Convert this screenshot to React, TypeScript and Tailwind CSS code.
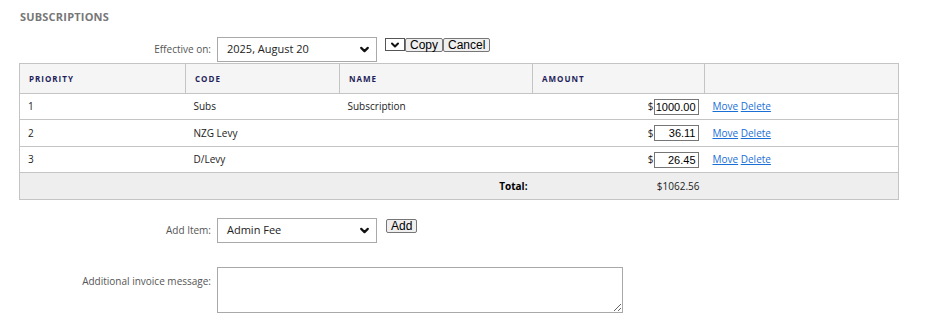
const rows = [
  { priority: "1", code: "Subs", name: "Subscription", amount: "1000.00", h: "h-[26px]" },
  { priority: "2", code: "NZG Levy", name: "", amount: "36.11", h: "h-[27px]" },
  { priority: "3", code: "D/Levy", name: "", amount: "26.45", h: "h-[26px]" },
];

function Chevron({ size = 10 }: { size?: number }) {
  return (
    <svg width={size} height={size} viewBox="0 0 10 10" fill="none" stroke="#111" strokeWidth="2" strokeLinecap="round" strokeLinejoin="round">
      <path d="M2 3.5l3 3 3-3" />
    </svg>
  );
}

function FakeSelect({ value }: { value: string }) {
  return (
    <div className="w-[160px] h-[25px] border border-[#a9a9a9] bg-white flex items-center justify-between pl-[9px] pr-[6px] text-[11px] text-[#222]">
      <span>{value}</span>
      <Chevron size={11} />
    </div>
  );
}

function NativeButton({ children }: { children: React.ReactNode }) {
  return (
    <button className="h-[14px] px-[4px] border border-[#767676] rounded-[2px] bg-[#efefef] text-[12px] leading-[12px] text-black font-['Liberation_Sans',Arial,sans-serif]">
      {children}
    </button>
  );
}

export default function App() {
  const th = "border border-[#c4c4c4] text-left pl-[9px] text-[8px] font-bold tracking-[1px] text-[#1e1e5a] h-[30px]";
  const td = "border border-[#c4c4c4] pl-[8px] text-[10px] text-[#222]";

  return (
    <div className="w-[939px] h-[321px] bg-white font-['Open_Sans',sans-serif] overflow-hidden">
      <div className="pt-[10px] pl-[20px] text-[11px] font-bold text-[#777] leading-[14px] tracking-[0.2px]">SUBSCRIPTIONS</div>

      {/* Effective on */}
      <div className="flex items-start mt-[13px]">
        <div className="w-[211px] h-[25px] flex items-center justify-end text-[10px] text-[#555]">Effective on:</div>
        <div className="ml-[6px]">
          <FakeSelect value="2025, August 20" />
        </div>
        <div className="ml-[8px] mt-[1px] flex items-start">
          <div className="w-[20px] h-[13px] border border-[#555] bg-white flex items-center justify-center">
            <Chevron size={10} />
          </div>
          <NativeButton>Copy</NativeButton>
          <NativeButton>Cancel</NativeButton>
        </div>
      </div>

      {/* Table */}
      <div className="pl-[19px] mt-[1px]">
        <table className="border-collapse table-fixed w-[879px]">
          <colgroup>
            <col className="w-[166px]" />
            <col className="w-[154px]" />
            <col className="w-[193px]" />
            <col className="w-[172px]" />
            <col className="w-[194px]" />
          </colgroup>
          <thead>
            <tr className="bg-[#f5f5f5]">
              <th className={th}>PRIORITY</th>
              <th className={th}>CODE</th>
              <th className={th}>NAME</th>
              <th className={th}>AMOUNT</th>
              <th className={th}></th>
            </tr>
          </thead>
          <tbody>
            {rows.map((r) => (
              <tr key={r.priority} className={r.h}>
                <td className={`${td} border-r-0`}>{r.priority}</td>
                <td className={`${td} border-x-0`}>{r.code}</td>
                <td className={`${td} border-x-0`}>{r.name}</td>
                <td className={`${td} border-x-0 pr-[6px]`}>
                  <div className="flex items-center justify-end">
                    <span>$</span>
                    <div className="w-[45px] h-[16px] border border-[#767676] text-right pr-[2px] text-[11px] leading-[14px] text-black font-['Liberation_Sans',Arial,sans-serif]">
                      {r.amount}
                    </div>
                  </div>
                </td>
                <td className={`${td} border-l-0 pl-[7px]`}>
                  <a href="#" className="text-[#1a6fd6] underline">Move</a>{" "}
                  <a href="#" className="text-[#1a6fd6] underline">Delete</a>
                </td>
              </tr>
            ))}
            <tr className="bg-[#eeeeee] h-[27px]">
              <td className={`${td} border-r-0`}></td>
              <td className={`${td} border-x-0`}></td>
              <td className={`${td} border-x-0 text-right pr-[5px] font-bold text-black`}>Total:</td>
              <td className={`${td} border-x-0 text-right pr-[5px]`}>$1062.56</td>
              <td className={`${td} border-l-0`}></td>
            </tr>
          </tbody>
        </table>
      </div>

      {/* Add item */}
      <div className="flex items-start mt-[18px]">
        <div className="w-[211px] h-[25px] flex items-center justify-end text-[10px] text-[#555]">Add Item:</div>
        <div className="ml-[6px]">
          <FakeSelect value="Admin Fee" />
        </div>
        <div className="ml-[9px] mt-[1px] flex">
          <NativeButton>Add</NativeButton>
        </div>
      </div>

      {/* Message */}
      <div className="flex items-start mt-[24px]">
        <div className="w-[211px] pt-[7px] text-right text-[10px] text-[#555]">Additional invoice message:</div>
        <textarea className="ml-[6px] w-[406px] h-[46px] border border-[#a9a9a9] bg-white resize" />
      </div>
    </div>
  );
}
